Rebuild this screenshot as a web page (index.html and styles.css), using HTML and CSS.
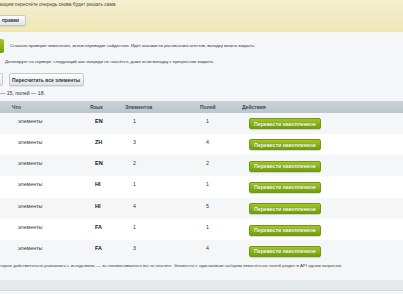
FILE: index.html
```html
<!DOCTYPE html>
<html lang="ru">
<head>
    <meta charset="UTF-8">
    <meta name="viewport" content="width=device-width, initial-scale=1.0">
    <title>Очередь перевода</title>
    <link rel="stylesheet" href="styles.css">
</head>
<body>
    <div class="note">
        <p class="note-text">ющем пересчёте очередь снова будет решать сама</p>
        <button class="btn btn-cut">правки</button>
    </div>

    <div class="actions">
        <div class="action-line">
            <span class="stub stub-green"></span>
            <span class="hint">Сначала проверит изменения, затем переводит найденное. Идёт шагами по расписанию агентов, вкладку можно закрыть.</span>
        </div>
        <p class="hint hint-server">Делегирует на сервере: следующий шаг очереди не начнётся, даже если вкладку с прогрессом закрыть.</p>
        <div class="btn-row">
            <span class="stub stub-grey"></span>
            <button class="btn btn-tall">Пересчитать все элементы</button>
        </div>
        <p class="totals">— 15, полей — 18.</p>
    </div>

    <table class="grid">
        <colgroup>
            <col class="c-what">
            <col class="c-lang">
            <col class="c-items">
            <col class="c-fields">
            <col>
        </colgroup>
        <thead>
            <tr>
                <th class="th-what">Что</th>
                <th>Язык</th>
                <th>Элементов</th>
                <th>Полей</th>
                <th>Действия</th>
            </tr>
        </thead>
        <tbody id="rows"></tbody>
    </table>

    <p class="footnote">торые действительно разошлись с исходником, — за неизменившееся вы не платите. Элементы с одинаковым набором изменённых полей уходят в API одним запросом.</p>
    <div class="footer-bar"></div>

    <script>
        const queue = [
            { lang: 'EN', items: 1, fields: 1 },
            { lang: 'ZH', items: 3, fields: 4 },
            { lang: 'EN', items: 2, fields: 2 },
            { lang: 'HI', items: 1, fields: 1 },
            { lang: 'HI', items: 4, fields: 5 },
            { lang: 'FA', items: 1, fields: 1 },
            { lang: 'FA', items: 3, fields: 4 }
        ];

        const rows = document.getElementById('rows');
        queue.forEach(row => {
            const tr = document.createElement('tr');
            tr.innerHTML = `
                <td class="td-what">элементы</td>
                <td class="td-lang">${row.lang}</td>
                <td class="td-items">${row.items}</td>
                <td class="td-fields">${row.fields}</td>
                <td class="td-action"><button class="btn-green">Перевести накопленное</button></td>`;
            rows.appendChild(tr);
        });
    </script>
</body>
</html>
```

FILE: styles.css
```css
* {
    box-sizing: border-box;
    margin: 0;
    padding: 0;
}
body {
    width: 403px;
    height: 294px;
    overflow: hidden;
    background: #f4f6f8;
    font-family: 'Liberation Sans', Arial, sans-serif;
    color: #333;
}
.note {
    height: 32px;
    padding-top: 2px;
    background: linear-gradient(#f5efcf, #efe6b6);
}
.note-text {
    font-size: 4.8px;
    line-height: 6px;
    color: #444;
}
.btn {
    display: inline-flex;
    align-items: center;
    justify-content: center;
    height: 11px;
    padding: 0 5px;
    white-space: nowrap;
    font-family: 'Liberation Sans', Arial, sans-serif;
    font-size: 5.05px;
    font-weight: bold;
    color: #333;
    background: linear-gradient(#fefefe, #e0e5e7);
    border: 1px solid #c2c9cc;
    border-radius: 2px;
    box-shadow: 0 1px 0 rgba(0,0,0,0.07);
}
.btn-cut {
    margin-top: 7px;
    margin-left: -5px;
    padding: 0 6px 0 6px;
    font-size: 4.9px;
}
.btn-tall {
    height: 13px;
    padding: 0 3px 0 2px;
}
.action-line {
    display: flex;
    align-items: center;
    gap: 6px;
    height: 14px;
    margin-top: 7px;
}
.stub {
    display: block;
    border-radius: 0 2px 2px 0;
}
.stub-green {
    width: 4px;
    height: 14px;
    background: linear-gradient(#a3c62a, #74a00d);
}
.stub-grey {
    width: 3px;
    height: 13px;
    background: linear-gradient(#fefefe, #e0e5e7);
    border: 1px solid #c2c9cc;
    border-left: none;
}
.hint {
    font-size: 4.3px;
    line-height: 6px;
    color: #333;
}
.hint-server {
    margin-top: 6px;
    padding-left: 5px;
}
.btn-row {
    display: flex;
    gap: 6px;
    margin-top: 8px;
}
.totals {
    margin-top: 4px;
    font-size: 5.2px;
    line-height: 6px;
    color: #333;
}
.grid {
    width: 100%;
    margin-top: 4.5px;
    border-collapse: collapse;
    table-layout: fixed;
}
.c-what { width: 90px; }
.c-lang { width: 35px; }
.c-items { width: 75px; }
.c-fields { width: 42px; }
th {
    height: 12px;
    padding: 0;
    text-align: left;
    font-size: 5px;
    font-weight: bold;
    color: #3c4850;
    background: linear-gradient(#ccd3d8, #bcc5cb);
}
.th-what {
    padding-left: 12px;
}
tbody tr {
    height: 21.33px;
}
tbody tr:nth-child(odd) {
    background: #f4f6f7;
}
tbody tr:nth-child(even) {
    background: #ffffff;
}
td {
    vertical-align: top;
    padding-top: 5px;
    font-size: 5.3px;
    line-height: 6px;
    color: #333;
}
.td-what { padding-left: 18px; }
.td-lang {
    padding-left: 5px;
    font-size: 5.5px;
    font-weight: bold;
    color: #111;
}
.td-items { padding-left: 8px; }
.td-fields { padding-left: 6px; }
.td-action {
    padding-left: 7px;
    padding-top: 5.5px;
}
.btn-green {
    display: flex;
    align-items: center;
    justify-content: center;
    width: 72px;
    height: 11px;
    white-space: nowrap;
    font-family: 'Liberation Sans', Arial, sans-serif;
    font-size: 5.2px;
    font-weight: bold;
    color: #fff;
    text-shadow: 0 0 1px rgba(60,90,0,0.6);
    background: linear-gradient(#a2c52a, #72a00c);
    border: 1px solid #6f9a0d;
    border-radius: 2px;
    box-shadow: 0 1px 1px rgba(0,0,0,0.15);
}
.footnote {
    margin-top: 1.5px;
    font-size: 4.3px;
    line-height: 6px;
    color: #444;
}
.footer-bar {
    height: 11px;
    margin-top: 10.5px;
    background: #e5eaed;
    border-bottom: 1px solid #d2d9dd;
}
```
